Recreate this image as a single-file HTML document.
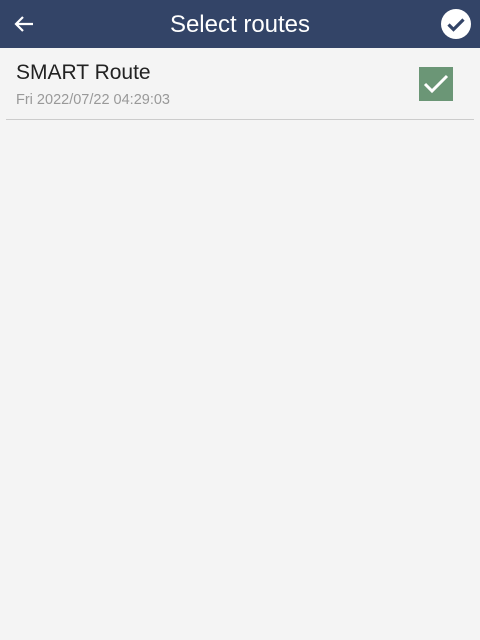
<!DOCTYPE html>
<html><head><style>
body{margin:0;width:480px;height:640px;background:#f4f4f4;font-family:"Liberation Sans",sans-serif;position:relative;overflow:hidden}
.bar{position:absolute;left:0;top:0;width:480px;height:48px;background:#334467}
.title{position:absolute;left:0;width:480px;top:11px;text-align:center;color:#fff;font-size:24px}
.name{position:absolute;left:16px;top:61px;font-size:21px;color:#222}
.date{position:absolute;left:16px;top:92px;font-size:14.5px;color:#999}
.line{position:absolute;left:6px;width:468px;top:119px;height:1px;background:#ccc}
.cb{position:absolute;left:419px;top:67px;width:34px;height:34px;background:#6b9676}
</style></head><body>
<div class="bar"></div>
<div class="title">Select routes</div>
<svg style="position:absolute;left:12px;top:12px" width="24" height="24" viewBox="0 0 24 24"><path d="M21 12H4M11 5l-7 7 7 7" stroke="#fff" stroke-width="2.2" fill="none"/></svg>
<svg style="position:absolute;left:440px;top:8px" width="32" height="32" viewBox="0 0 32 32"><circle cx="16" cy="16" r="15" fill="#fff"/><path d="M8.5 16.5l5 5 10-10" stroke="#334467" stroke-width="3.2" fill="none"/></svg>
<div class="name">SMART Route</div>
<div class="date">Fri 2022/07/22 04:29:03</div>
<div class="cb"><svg width="34" height="34" viewBox="0 0 34 34"><path d="M6 17l7 7 15-15" stroke="#fff" stroke-width="3" fill="none"/></svg></div>
<div class="line"></div>
</body></html>
